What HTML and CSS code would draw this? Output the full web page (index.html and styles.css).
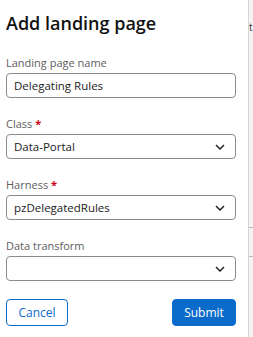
FILE: index.html
```html
<!DOCTYPE html>
<html lang="en">
<head>
    <meta charset="UTF-8">
    <meta name="viewport" content="width=device-width, initial-scale=1.0">
    <title>Add landing page</title>
    <link rel="stylesheet" href="styles.css">
</head>
<body>
    <div class="page">
        <div class="dialog">
            <h1>Add landing page</h1>
            <form id="landingForm">
                <div class="form-group">
                    <label for="lpName">Landing page name</label>
                    <input type="text" id="lpName" class="field" value="Delegating Rules">
                </div>
                <div class="form-group">
                    <label for="lpClass">Class <span class="req">*</span></label>
                    <div class="select">
                        <span class="value">Data-Portal</span>
                        <svg class="chevron" width="10" height="6" viewBox="0 0 10 6"><path d="M1 1l4 4 4-4" fill="none" stroke="#222" stroke-width="1.5"/></svg>
                    </div>
                </div>
                <div class="form-group">
                    <label for="lpHarness">Harness <span class="req">*</span></label>
                    <div class="select">
                        <span class="value">pzDelegatedRules</span>
                        <svg class="chevron" width="10" height="6" viewBox="0 0 10 6"><path d="M1 1l4 4 4-4" fill="none" stroke="#222" stroke-width="1.5"/></svg>
                    </div>
                </div>
                <div class="form-group">
                    <label for="lpTransform">Data transform</label>
                    <div class="select">
                        <span class="value"></span>
                        <svg class="chevron" width="10" height="6" viewBox="0 0 10 6"><path d="M1 1l4 4 4-4" fill="none" stroke="#222" stroke-width="1.5"/></svg>
                    </div>
                </div>
                <div class="actions">
                    <button type="button" class="btn-secondary">Cancel</button>
                    <button type="submit" class="btn-primary">Submit</button>
                </div>
            </form>
        </div>
        <div class="side">
            <span class="side-text">t:</span>
            <div class="side-line"></div>
            <div class="side-line second"></div>
        </div>
    </div>
</body>
</html>
```

FILE: styles.css
```css
body {
    margin: 0;
    font-family: "Open Sans", sans-serif;
    color: #1b1b1b;
    background: #fff;
}
.page {
    display: flex;
    height: 337px;
    overflow: hidden;
}
.dialog {
    width: 230px;
    padding: 11px 12px 0 6px;
    flex: none;
}
h1 {
    margin: 0 0 20px;
    font-size: 18px;
    line-height: 24px;
    font-weight: 600;
    color: #111;
}
.form-group {
    margin-bottom: 18px;
}
label {
    display: block;
    font-size: 11px;
    line-height: 16px;
    margin-bottom: 2px;
    color: #5e5e5e;
}
.req {
    color: #d0021b;
    font-weight: 700;
}
.field,
.select {
    box-sizing: border-box;
    width: 230px;
    height: 25px;
    border: 1px solid #8c8c8c;
    border-radius: 4px;
    font-family: "Open Sans", sans-serif;
    font-size: 11.5px;
    color: #1b1b1b;
    padding: 0 7px;
    margin: 0;
}
.select {
    display: flex;
    align-items: center;
    justify-content: space-between;
    padding-right: 10px;
}
.chevron {
    flex: none;
}
.actions {
    display: flex;
    justify-content: space-between;
    margin-top: 17px;
}
.actions button {
    font-family: "Open Sans", sans-serif;
    font-size: 12px;
    height: 27px;
    border-radius: 4px;
    cursor: pointer;
}
.btn-secondary {
    width: 62px;
    background: #fff;
    border: 1px solid #0b6bcb;
    color: #0b6bcb;
}
.btn-primary {
    width: 64px;
    background: #0b6bcb;
    border: 1px solid #0b6bcb;
    color: #fff;
}
.side {
    flex: 1;
    position: relative;
    background: #f3f3f3;
    border-left: 1px solid #d6d6d6;
    overflow: hidden;
}
.side-text {
    position: absolute;
    top: 20px;
    left: 0;
    font-size: 10px;
    color: #333;
}
.side-line {
    position: absolute;
    left: 0;
    right: 0;
    top: 227px;
    height: 1px;
    background: #bdbdbd;
}
.side-line.second {
    top: 256px;
}
```
